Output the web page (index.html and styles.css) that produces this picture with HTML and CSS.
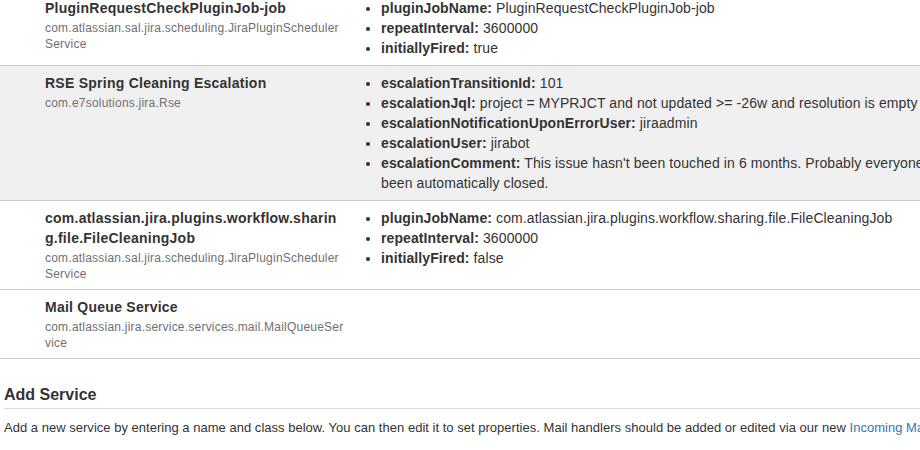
FILE: index.html
```html
<!DOCTYPE html>
<html>
<head>
<meta charset="utf-8">
<link rel="stylesheet" href="styles.css">
</head>
<body>
<div class="page">
  <div class="services">
    <div class="row">
      <div class="name-cell">
        <div class="svc-name">PluginRequestCheckPluginJob-job</div>
        <div class="svc-class">com.atlassian.sal.jira.scheduling.JiraPluginSchedulerService</div>
      </div>
      <div class="props-cell">
        <ul class="props">
          <li><b>pluginJobName:</b> PluginRequestCheckPluginJob-job</li>
          <li><b>repeatInterval:</b> 3600000</li>
          <li><b>initiallyFired:</b> true</li>
        </ul>
      </div>
    </div>
    <div class="row alt">
      <div class="name-cell">
        <div class="svc-name">RSE Spring Cleaning Escalation</div>
        <div class="svc-class">com.e7solutions.jira.Rse</div>
      </div>
      <div class="props-cell">
        <ul class="props">
          <li><b>escalationTransitionId:</b> 101</li>
          <li><b>escalationJql:</b> project = MYPRJCT and not updated &gt;= -26w and resolution is empty</li>
          <li><b>escalationNotificationUponErrorUser:</b> jiraadmin</li>
          <li><b>escalationUser:</b> jirabot</li>
          <li><b>escalationComment:</b> This issue hasn't been touched in 6 months. Probably everyone has forgotten about it, so it has <span class="keep">been automatically closed.</span></li>
        </ul>
      </div>
    </div>
    <div class="row">
      <div class="name-cell">
        <div class="svc-name">com.atlassian.jira.plugins.workflow.sharing.file.FileCleaningJob</div>
        <div class="svc-class">com.atlassian.sal.jira.scheduling.JiraPluginSchedulerService</div>
      </div>
      <div class="props-cell">
        <ul class="props">
          <li><b>pluginJobName:</b> com.atlassian.jira.plugins.workflow.sharing.file.FileCleaningJob</li>
          <li><b>repeatInterval:</b> 3600000</li>
          <li><b>initiallyFired:</b> false</li>
        </ul>
      </div>
    </div>
    <div class="row">
      <div class="name-cell">
        <div class="svc-name">Mail Queue Service</div>
        <div class="svc-class">com.atlassian.jira.service.services.mail.MailQueueService</div>
      </div>
      <div class="props-cell"></div>
    </div>
  </div>

  <div class="add">
    <h2 class="add-title">Add Service</h2>
    <p class="add-desc">Add a new service by entering a name and class below. You can then edit it to set properties. Mail handlers should be added or edited via our new <a href="#" class="link">Incoming Mail</a> page.</p>
  </div>
</div>
</body>
</html>
```
FILE: styles.css
```css
html, body {
  margin: 0;
  padding: 0;
  overflow: hidden;
  background: #fff;
}
body {
  font-family: "Liberation Sans", Arial, sans-serif;
  font-size: 14px;
  line-height: 20px;
  color: #333;
}
.page {
  width: 1300px;
}
.services {
  margin-top: -9px;
}
.row {
  display: grid;
  grid-template-columns: 355px 1fr;
  border-bottom: 1px solid #ccc;
}
.row.alt {
  background: #f0f0f0;
}
.name-cell {
  padding: 7px 10px 7px 45px;
  overflow-wrap: anywhere;
  word-break: break-all;
}
.svc-name {
  font-weight: bold;
  line-height: 20px;
  letter-spacing: 0.25px;
}
.svc-class {
  margin-top: 2px;
  font-size: 12px;
  line-height: 16px;
  letter-spacing: 0.22px;
  color: #707070;
}
.props-cell {
  padding: 7px 0 7px 0;
}
.props {
  margin: 0;
  padding-left: 26px;
  width: 860px;
  letter-spacing: 0.1px;
}
.props li {
  line-height: 20px;
}
.keep {
  white-space: nowrap;
}
.add {
  padding-left: 4px;
}
.add-title {
  margin: 26px 0 0 0;
  font-size: 16px;
  line-height: 20px;
  font-weight: bold;
  padding-bottom: 3px;
  border-bottom: 1px solid #ddd;
}
.add-desc {
  margin: 9px 0 0 0;
  font-size: 13px;
  letter-spacing: 0.02px;
  white-space: nowrap;
}
.link {
  color: #3b73af;
  text-decoration: none;
}
```
